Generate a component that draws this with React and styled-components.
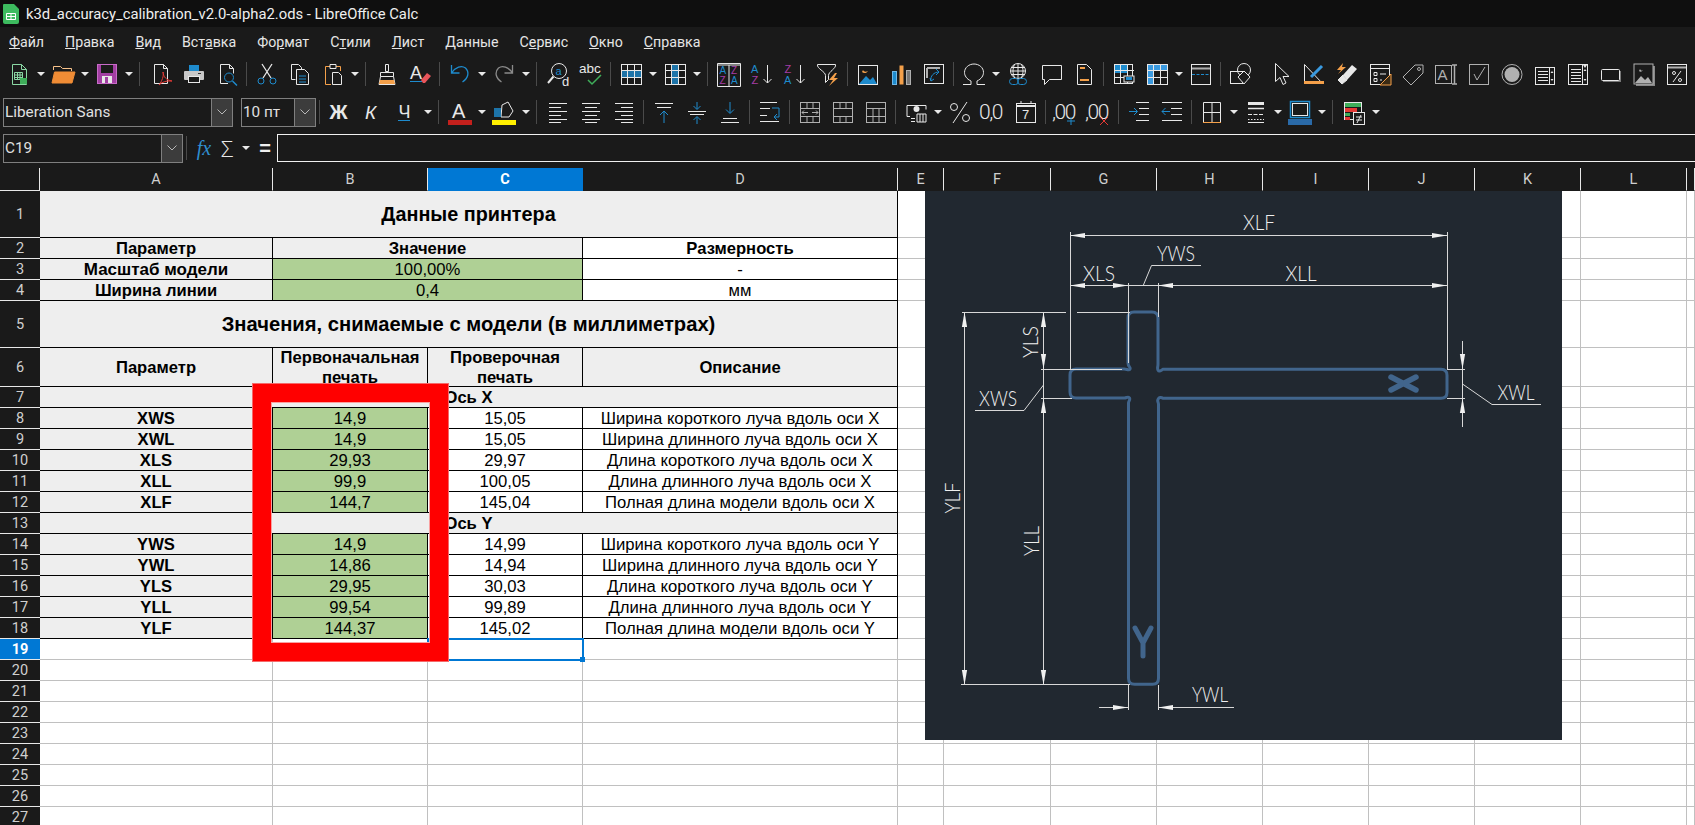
import React from "react";
import styled, { createGlobalStyle } from "styled-components";

const B = "#1e8bcd";
const O = "#f4a04a";
const P = "#a63ca6";
const GR = "#3fae5a";
const R = "#e53935";
const W = "#e8e8e8";
const GY = "#b0b0b0";

const lines = (list, color = W) => (
  <path d={list.map(([x1, x2, y]) => `M${x1} ${y + 0.5}H${x2}`).join("")} stroke={color} />
);
const gridLines = "M8.5 3v19M15.5 3v19M3 8.5h19M3 15.5h19";

const icons = {
  newdoc: (<><path d="M5.5 2.5h9l5 5v15h-14zM14.5 2.5v5h5" stroke="#8ad8a4" /><path d="M7.5 10.5h8v7h-8zM7.5 13h8M7.5 15.5h8M10.5 10.5v7M13 10.5v7" stroke="#8ad8a4" /><rect x="13" y="16" width="7" height="6" fill={GR} /></>),
  open: (<><path d="M2.5 8V4.5h7l2 2h9V9" stroke="#f8c28a" /><path d="M1 21l2.5-11H24l-3 11z" fill="#f08c35" stroke="#f08c35" /></>),
  save: (<><rect x="2.5" y="2.5" width="19" height="19" fill="#a33ea3" stroke="#c76bc7" /><rect x="6" y="3" width="12" height="8" fill="#1a1a1a" /><rect x="7" y="14" width="10" height="7" fill={W} /><rect x="10" y="15" width="3" height="6" fill="#a33ea3" /></>),
  pdf: (<><path d="M5.5 2.5h9l4 4v15h-13zM14.5 2.5v4h4" stroke={W} /><path d="M10 23c3-4 5-9 4-13 .5 5 3 8 9 9-6-.5-10 1-13 4z" stroke={R} /></>),
  print: (<><rect x="7" y="3" width="10" height="6" fill={B} /><rect x="2" y="9" width="20" height="9" rx="1" fill="#c8c8c8" /><rect x="6.5" y="14.5" width="11" height="6" fill="#1a1a1a" stroke={W} /><rect x="16" y="11" width="3" height="1" fill="#333" /></>),
  preview: (<><path d="M13 21.5H5.500v-19h9l4 4v5M14.500 2.500v4h4" stroke={W} /><circle cx="14" cy="15.500" r="4.500" stroke={B} /><path d="M17.500 19l4.500 4.500" stroke={B} strokeWidth="1.500" /></>),
  cut: (<><path d="M7 2l9 14M17 2L8 16" stroke={W} strokeWidth="1.300" /><circle cx="6" cy="19" r="3" stroke={B} /><circle cx="18" cy="19" r="3" stroke={B} /></>),
  copy: (<><path d="M7.500 17.500h-4v-15h7l3 3v2M8.500 7.500h8l4 4v11h-12z" stroke={W} /><path d="M11 14h7M11 17h7M11 20h7" stroke={B} /></>),
  paste: (<><path d="M9 4.500H4.500v18H10M15 4.500h4.500V9" stroke={O} /><path d="M9 2.500h6v4H9zM11.500 10.500h6l3 3v9h-9z" stroke={W} /></>),
  brush: (<><path d="M10.500 2.500h3v7h-3zM5.500 10.500h13v4h-13zM5.500 14.500L4 22.500h16l-1.500-8" stroke={W} /><path d="M5 18h14l1 4H4z" fill={O} /></>),
  clear: (<><text x="2" y="17" fontSize="18" fill={W}>A</text><rect x="2" y="19" width="12" height="1" fill={B} /><path d="M13 18l6-7 4 3-6 7h-2z" fill="#e8555a" /></>),
  undo: <path d="M3.500 3v8h8M3.500 11c4-6 10-8 14-5 4 4 3 10-3 14" stroke={B} strokeWidth="1.300" />,
  redo: <path d="M20.500 3v8h-8M20.500 11c-4-6-10-8-14-5-4 4-3 10 3 14" stroke="#8a8a8a" strokeWidth="1.300" />,
  find: (<><circle cx="13" cy="9" r="7.500" stroke={W} /><path d="M7.500 14.500L2 21" stroke={W} strokeWidth="2" /><text x="9.500" y="13" fontSize="11" fill={B}>a</text><text x="16" y="24" fontSize="13" fill={W}>d</text></>),
  abc: (<><text x="0" y="11" fontSize="13.500" fill={W}>abc</text><path d="M9 18l4 4 9-9" stroke={GR} strokeWidth="1.500" /></>),
  rowhl: (<><rect x="3" y="8" width="19" height="7" fill={B} opacity=".8" /><rect x="2.500" y="2.500" width="20" height="20" stroke={W} /><path d={gridLines} stroke={W} /></>),
  colhl: (<><rect x="9" y="3" width="6" height="19" fill={B} opacity=".8" /><rect x="2.500" y="2.500" width="20" height="20" stroke={W} /><path d={gridLines} stroke={W} /></>),
  sortaz: (<><path d="M.5 1.500h23v23H.5zM12 3v21M1 3h22" stroke={W} /><text x="2.500" y="12" fontSize="10" fill={B}>A</text><text x="2.500" y="22" fontSize="10" fill={P}>Z</text><text x="14" y="12" fontSize="10" fill={P}>Z</text><text x="14" y="22" fontSize="10" fill={B}>A</text></>),
  sortup: (<><text x="1" y="11" fontSize="11" fill={B}>A</text><text x="1.500" y="22" fontSize="11" fill={P}>Z</text><path d="M17.500 3v18M13.500 17l4 4 4-4" stroke={W} /></>),
  sortdown: (<><text x="1.500" y="11" fontSize="11" fill={P}>Z</text><text x="1" y="22" fontSize="11" fill={B}>A</text><path d="M17.500 3v18M13.500 17l4 4 4-4" stroke={W} /></>),
  filter: (<><path d="M1.500 2.500h18c1 4-7 7-7 11v4l-3 3v-7c0-4-9-7-8-11z" stroke={W} /><path d="M19 11l-6 7h4l-4 6 9-8h-4l3-5z" fill={O} /></>),
  image: (<><rect x="2.500" y="3.500" width="19" height="19" stroke={W} /><path d="M3 22l7-8 4 4 3-3 4 7z" fill={B} /><path d="M7 8c1 2 3 2 5 1-1 2-4 3-6 1z" fill={O} /></>),
  chart: (<><rect x="3.500" y="9.500" width="4" height="13" fill={B} stroke="#6fb7e6" /><rect x="10.500" y="3.500" width="4" height="19" fill={O} /><rect x="17.500" y="8.500" width="4" height="14" fill="#777" stroke={GY} /></>),
  pivot: (<><rect x="2.500" y="2.500" width="19" height="19" stroke={W} /><path d="M5 6h13M5 6v10" stroke={GY} strokeWidth="2" /><path d="M9 19c-1-5 3-9 8-9M14 7l3 3-3 3M8 16l1 3 3-2" stroke={B} /></>),
  omega: <path d="M1 22.500h8v-3.500C4.500 17 2.500 13.500 2.500 10.500 2.500 5.500 7 2 12 2s9.500 3.500 9.500 8.500c0 3-2 6.500-6.500 8.500v3.500h8" stroke={W} />,
  link: (<><circle cx="12" cy="9" r="7.500" stroke={W} /><path d="M12 1.500v15M4.500 9h15M5 5.500h14M5 12.500h14M8.500 2.500c-2 4-2 9 0 13M15.500 2.500c2 4 2 9 0 13" stroke={W} /><rect x="3.500" y="16.500" width="9" height="6" rx="3" stroke={B} fill="#1a1a1a" /><rect x="11.500" y="16.500" width="9" height="6" rx="3" stroke={B} /></>),
  comment: <path d="M3.500 3.500h19v14h-12l-5 5v-5h-2z" stroke={W} />,
  header: (<><path d="M5.500 2.500h9l5 5v15h-14z" stroke={W} /><path d="M8 6h5M8 18h9" stroke={O} strokeWidth="2" /></>),
  freezeprint: (<><rect x="2.500" y="2.500" width="18" height="19" stroke={W} /><rect x="3" y="3" width="12" height="8" fill={B} /><path d={gridLines} stroke={W} /><rect x="12" y="14" width="10" height="6" fill="#1a1a1a" stroke={W} /><rect x="14" y="15" width="6" height="3" fill={B} /></>),
  freeze: (<><rect x="3" y="3" width="6" height="20" fill="#3a9ae0" /><rect x="3" y="3" width="20" height="6" fill="#3a9ae0" /><rect x="2.500" y="2.500" width="20" height="20" stroke={W} /><path d={gridLines} stroke={W} /></>),
  split: (<><rect x="2.500" y="2.500" width="19" height="20" stroke={W} /><path d="M3 6.500h18" stroke={GY} strokeWidth="2" /><path d="M3 12.500h18" stroke={B} strokeDasharray="3 1.500" /></>),
  shapes: (<><rect x="1.500" y="9.500" width="12" height="12" stroke={W} /><circle cx="15" cy="8" r="6.500" stroke={W} /><path d="M15 9l6 6-6 7-6-7z" stroke={W} fill="#1a1a1a" /></>),
  pointer: <path d="M6.500 1.500v18l4.500-4 3 7 3-1.500-3-6.500h6z" stroke={W} />,
  measure: (<><path d="M2.500 2.500v19h18z" stroke={W} /><rect x="2" y="19" width="20" height="3" fill={O} /><path d="M9 15l11-11" stroke="#3a9ae0" strokeWidth="3" /></>),
  highlight: (<><path d="M8 13l9-10 5 4-10 11z" fill={W} /><path d="M3 18l5-5 4 5-5 4z" stroke={W} fill={W} /><path d="M8 1L2 8h4l-3 4 8-7H7z" fill={O} /></>),
  form: (<><rect x="2.500" y="2.500" width="19" height="20" stroke={W} /><path d="M3 6.500h18M6 10.500h3v3H6zM6 16.500h3v3H6zM12 12h6M12 18h2" stroke={W} /><path d="M23 12v11H12z" stroke={O} fill="#3a2a14" /></>),
  tag: (<><path d="M14 3h8v8L10 23 2 15z" stroke={GY} /><circle cx="18" cy="7" r="1.500" stroke={GY} /></>),
  ai: (<><rect x="1.500" y="3.500" width="16" height="18" stroke={GY} /><text x="3.500" y="18" fontSize="15" fill={GY}>A</text><path d="M18 3h5M20.500 3v19M18 22h5" stroke={GY} strokeWidth="1.500" /></>),
  checkb: (<><rect x="2.500" y="2.500" width="19" height="20" stroke={GY} /><path d="M7 12l3 6 8-13" stroke={GY} /></>),
  radio: (<><circle cx="12" cy="12.500" r="10" stroke={GY} /><circle cx="12" cy="12.500" r="7.500" fill={GY} /></>),
  listb: (<><rect x="2.500" y="5.500" width="19" height="17" stroke={W} /><path d="M5 9.500h10M5 12.500h10M5 15.500h10M5 18.500h10M16.500 6v16" stroke={W} /><path d="M19 9l1.500 2h-3zM19 19l1.500-2h-3z" fill={W} /></>),
  listb2: (<><rect x="2.500" y="2.500" width="19" height="20" stroke={W} /><path d="M5 7.500h10M5 10.500h10M5 13.500h10M5 16.500h10M5 19.500h10M16.500 3v19" stroke={W} /><path d="M19 7l1.500 2h-3zM19 19l1.500-2h-3zM17 3h4l-2 3z" fill={W} /></>),
  rectb: (<><rect x="4" y="9" width="18" height="11" fill="#777" /><rect x="2.500" y="7.500" width="18" height="11" rx="1" fill="#1a1a1a" stroke={W} /></>),
  imgb: (<><rect x="4" y="4" width="19" height="20" fill="#888" /><rect x="2" y="2" width="19" height="20" fill="#1a1a1a" stroke={GY} /><path d="M3 21l6-7 4 4 3-3 4 6z" fill={GY} /><path d="M8 7c1 2 2 2 3 1-1 2-3 2-4 1z" fill={GY} /></>),
  pct: (<><rect x="2.500" y="2.500" width="19" height="20" stroke={W} /><path d="M3 5.500h18" stroke={GY} strokeWidth="2" /><path d="M16 9L8 20" stroke={W} /><circle cx="9" cy="11" r="1.500" stroke={W} /><circle cx="15" cy="18" r="1.500" stroke={W} /></>),
  bold: <text x="1.500" y="19" fontSize="20" fontWeight="700" fill={W} fontFamily="Liberation Sans">Ж</text>,
  italic: <text x="4" y="19" fontSize="19" fontStyle="italic" fill={W} fontFamily="Liberation Sans">К</text>,
  under: (<><text x="4.500" y="18" fontSize="18" fill={W} fontFamily="Liberation Sans">Ч</text><rect x="4" y="20" width="12" height="1" fill={B} /></>),
  fontcolor: (<><text x="4" y="18" fontSize="20" fill={W}>A</text><rect x="0" y="20" width="24" height="5" fill="#c4201c" /></>),
  hilite: (<><path d="M10 5l6-3 5 9-4 6H9z" stroke={W} fill="#1a1a1a" /><rect x="2" y="8" width="7" height="9" fill={B} opacity=".8" /><rect x="0" y="20" width="24" height="5" fill="#ffef00" /></>),
  alignl: lines([[3, 21, 3], [3, 15, 7], [3, 21, 11], [3, 15, 15], [3, 21, 19], [3, 15, 22]]),
  alignc: lines([[3, 21, 3], [6, 18, 7], [3, 21, 11], [6, 18, 15], [3, 21, 19], [6, 18, 22]]),
  alignr: lines([[3, 21, 3], [9, 21, 7], [3, 21, 11], [9, 21, 15], [3, 21, 19], [9, 21, 22]]),
  vtop: (<>{lines([[3, 21, 3], [5, 19, 7]])}<path d="M12 23V11M8 15l4-4 4 4" stroke={B} /></>),
  vmid: (<>{lines([[3, 21, 11], [5, 19, 14]])}<path d="M12 2v7M8.500 6l3.500 3.500L15.500 6M12 24v-7M8.500 20l3.500-3.500 3.500 3.500" stroke={B} /></>),
  vbot: (<>{lines([[5, 19, 18], [3, 21, 22]])}<path d="M12 2v11M8 9.500l4 4 4-4" stroke={B} /></>),
  wrap: (<>{lines([[2, 19, 2], [2, 12, 8], [2, 9, 15], [2, 21, 21]])}<path d="M14 8h7v9h-5M19 14l-3 3 3 3" stroke={B} /></>),
  merge: (<><rect x="2.500" y="2.500" width="19" height="20" stroke={GY} /><path d="M3 8.500h18M3 16.500h18M9 3v5M15 3v5M9 17v5M15 17v5" stroke={GY} /><path d="M4 12.500h6M4 12.500l2-2M4 12.500l2 2M20 12.500h-6M20 12.500l-2-2M20 12.500l-2 2" stroke={GY} /></>),
  cell: (<><rect x="2.500" y="2.500" width="19" height="20" stroke={GY} /><path d="M3 8.500h18M3 16.500h18M9 3v5M15 3v5M9 17v5M15 17v5" stroke={GY} /></>),
  cell2: (<><rect x="2.500" y="2.500" width="19" height="20" stroke={GY} /><path d="M3 8.500h18M3 16.500h18M9 9v7M15 9v7M9 17v5M15 17v5" stroke={GY} /></>),
  currency: (<><path d="M3 16.500V5.500h19v4M3 16.500h3" stroke={W} /><circle cx="12.500" cy="9" r="3" fill={W} /><path d="M7 18.500h4M7 21.500h4M13 14h9v8h-9zM16 14v8M19 14v8" stroke={W} /></>),
  percent: (<><circle cx="6" cy="7" r="3.500" stroke={W} /><circle cx="18" cy="18" r="3.500" stroke={W} /><path d="M19 2L5 23" stroke={W} /></>),
  number: <text x="-2" y="19" fontSize="21" fontWeight="300" fill={W} fontFamily="Roboto" letterSpacing="-1.5">0,0</text>,
  date: (<><rect x="2.500" y="3.500" width="19" height="19" stroke={W} /><path d="M2.500 6h19" stroke={W} strokeWidth="2" /><path d="M7 1v3M17 1v3" stroke={W} /><text x="8" y="19" fontSize="13" fill={W}>7</text></>),
  adddec: (<><text x="-2" y="19" fontSize="21" fontWeight="300" fill={W} fontFamily="Roboto" letterSpacing="-1.5">,00</text><path d="M17 17v8M13 21h8" stroke={B} /></>),
  deldec: (<><text x="-2" y="19" fontSize="21" fontWeight="300" fill={W} fontFamily="Roboto" letterSpacing="-1.5">,00</text><path d="M13 17l8 8M21 17l-8 8" stroke={R} /></>),
  indent: (<>{lines([[9, 22, 2], [12, 22, 8], [12, 22, 14], [9, 22, 20]])}<path d="M2 11.500h8M7 8l3.500 3.500L7 15" stroke={B} /></>),
  outdent: (<>{lines([[2, 22, 2], [11, 22, 8], [11, 22, 14], [2, 22, 20]])}<path d="M2 11.500h8M5.500 8L2 11.500 5.500 15" stroke={B} /></>),
  borders: (<><path d="M3.500 2.500h17v20M3.500 2.500v20M12 3v19M3 12.500h18" stroke={W} /><path d="M3 22.500h18" stroke={O} /></>),
  borderstyle: (<><path d="M4 3.500h16" stroke={W} strokeWidth="3" /><path d="M4 8.500h16" stroke={W} strokeWidth="1.500" /><path d="M4 14.500h16" stroke={W} strokeDasharray="4 1.500" /><path d="M4 19.500h16" stroke={W} strokeDasharray="1.500 1.500" /><path d="M4 22.500h16" stroke={W} /></>),
  bordercolor: (<><rect x="2.500" y="1.500" width="19" height="16" stroke={B} strokeWidth="1.500" /><rect x="4.500" y="3.500" width="15" height="12" stroke={W} /><rect x="0" y="19" width="24" height="6" fill="#2a6aa8" /></>),
  cond: (<><rect x="2.500" y="2.500" width="17" height="17" stroke={W} /><rect x="3" y="3" width="16" height="4" fill={GR} /><rect x="3" y="8" width="12" height="4" fill={R} /><rect x="3" y="13" width="5" height="3" fill={GR} /><rect x="3" y="17" width="5" height="3" fill={R} /><rect x="11.500" y="12.500" width="11" height="12" fill="#1a1a1a" stroke={W} /><path d="M14 17h6M14 20h6M19 15l-4 8" stroke={W} /></>),
};

const topTools = ["newdoc", "d", "open", "d", "save", "d", "s", "pdf", "print", "preview", "s", "cut", "copy", "paste", "d", "s", "brush", "clear", "s", "undo", "d", "redo", "d", "s", "find", "abc", "s", "rowhl", "d", "colhl", "d", "s", "sortaz", "sortup", "sortdown", "filter", "s", "image", "chart", "pivot", "s", "omega", "d", "link", "comment", "header", "s", "freezeprint", "freeze", "d", "split", "s", "shapes", "g", "pointer", "measure", "highlight", "form", "tag", "ai", "checkb", "radio", "listb", "listb2", "rectb", "imgb", "pct"];
const fmtTools = ["s", "bold", "italic", "under", "d", "s", "fontcolor", "d", "hilite", "d", "s", "alignl", "alignc", "alignr", "s", "vtop", "vmid", "vbot", "s", "wrap", "s", "merge", "cell", "cell2", "s", "currency", "d", "percent", "number", "date", "s", "adddec", "deldec", "s", "indent", "outdent", "s", "borders", "d", "borderstyle", "d", "bordercolor", "d", "s", "cond", "d"];

const menus = [
  ["", "Ф", "айл"], ["", "П", "равка"], ["", "В", "ид"], ["Вст", "а", "вка"], ["Фо", "р", "мат"], ["С", "т", "или"],
  ["", "Л", "ист"], ["", "Д", "анные"], ["С", "е", "рвис"], ["", "О", "кно"], ["", "С", "правка"],
];

const colNames = ["A", "B", "C", "D", "E", "F", "G", "H", "I", "J", "K", "L", ""];
const rowSizes = [47, 21, 21, 21, 47, 39, ...Array(23).fill(21)];

const tableRows = [
  [{ t: "Данные принтера", span: 4, kind: "title", size: 19.8 }],
  [{ t: "Параметр", kind: "head" }, { t: "Значение", span: 2, kind: "head", plain: true }, { t: "Размерность", kind: "head", plain: true }],
  [{ t: "Масштаб модели", kind: "head", size: 17 }, { t: "100,00%", span: 2, kind: "green" }, { t: "-", kind: "white" }],
  [{ t: "Ширина линии", kind: "head" }, { t: "0,4", span: 2, kind: "green" }, { t: "мм", kind: "white" }],
  [{ t: "Значения, снимаемые с модели (в миллиметрах)", span: 4, kind: "title", size: 20.2 }],
  [{ t: "Параметр", kind: "head" }, { t: "Первоначальная печать", kind: "head" }, { t: "Проверочная печать", kind: "head" }, { t: "Описание", kind: "head" }],
  [{ t: "Ось X", span: 4, kind: "head" }],
];
const dataRow = (name, first, second, desc) => [
  { t: name, kind: "head" }, { t: first, kind: "green" }, { t: second, kind: "white" }, { t: desc, kind: "white" },
];
const tableData = [
  ...tableRows,
  dataRow("XWS", "14,9", "15,05", "Ширина короткого луча вдоль оси X"),
  dataRow("XWL", "14,9", "15,05", "Ширина длинного луча вдоль оси X"),
  dataRow("XLS", "29,93", "29,97", "Длина короткого луча вдоль оси X"),
  dataRow("XLL", "99,9", "100,05", "Длина длинного луча вдоль оси X"),
  dataRow("XLF", "144,7", "145,04", "Полная длина модели вдоль оси X"),
  [{ t: "Ось Y", span: 4, kind: "head" }],
  dataRow("YWS", "14,9", "14,99", "Ширина короткого луча вдоль оси Y"),
  dataRow("YWL", "14,86", "14,94", "Ширина длинного луча вдоль оси Y"),
  dataRow("YLS", "29,95", "30,03", "Длина короткого луча вдоль оси Y"),
  dataRow("YLL", "99,54", "99,89", "Длина длинного луча вдоль оси Y"),
  dataRow("YLF", "144,37", "145,02", "Полная длина модели вдоль оси Y"),
];

const Tool = ({ name }) => {
  if (name === "d") return <Drop />;
  if (name === "s") return <Sep />;
  if (name === "g") return <Sep $hidden />;
  return (
    <ToolIcon>
      <svg width="24" height="24" viewBox="0 0 24 24" fill="none" fontFamily="Liberation Sans" overflow="visible">
        {icons[name]}
      </svg>
    </ToolIcon>
  );
};

const Chevron = () => (
  <svg width="10" height="6" viewBox="0 0 10 6" fill="none">
    <path d="M.5.5L5 5 9.500.5" stroke="#b8b8b8" />
  </svg>
);

const Tip = ({ x, y, dir }) => {
  const len = 15;
  const half = 2.6;
  const pts = {
    l: [[x, y], [x + len, y - half], [x + len, y + half]],
    r: [[x, y], [x - len, y - half], [x - len, y + half]],
    u: [[x, y], [x - half, y + len], [x + half, y + len]],
    d: [[x, y], [x - half, y - len], [x + half, y - len]],
  }[dir];
  return <polygon points={pts.map((p) => p.join(",")).join(" ")} fill="#f0f0f0" stroke="none" />;
};

const DimText = ({ x, y, w, rot, children }) => (
  <text
    x={x}
    y={y + 7.5}
    textAnchor="middle"
    textLength={w}
    lengthAdjust="spacingAndGlyphs"
    fontFamily="Lato, 'Open Sans', sans-serif"
    fontWeight="300"
    fontSize="21"
    fill="#eeeeee"
    stroke="none"
    transform={rot ? `rotate(-90 ${x} ${y})` : undefined}
  >
    {children}
  </text>
);

const outline =
  "M1128 318q0-6 6-6h18q6 0 6 6v46c0 3-1 4 0 6s2 1 5-.7h278q6 0 6 6v17q0 6-6 6H1163c-2-1.500-4-1-5 1s.5 3 .5 5v274q0 6-6 6h-18q-6 0-6-6V403c0-2 2-3 1-5s-3 0-5 0H1076q-6 0-6-6v-17q0-6 6-6h48c3 0 5 2 6 0s-2-2-2-6z";

const Drawing = () => (
  <svg width="637" height="549" viewBox="925 191 637 549" fill="none">
    <path d={outline} stroke="#41658c" strokeWidth="3" />
    <path d="M1391 377l25 13M1416 377l-25 13" stroke="#41658c" strokeWidth="5.500" strokeLinecap="round" />
    <path d="M1135 628l8 15 8-15M1143 643v13" stroke="#41658c" strokeWidth="5" strokeLinecap="round" />
    <g stroke="#d8d8d8" strokeWidth="1">
      <path d="M1070.500 232v138M1447.500 232v138M1128.500 283v80M1158.500 283v34M1070 235.500h377M1070 285.500h377" />
      <path d="M1143 286l8.500-20.500H1201" />
      <path d="M962 312.500h104M1077 312.500h53M964.500 312v373M1043.500 312v373M1041 369.500h81M1041 398.500h31M1447 369.500h18M1447 398.500h18" />
      <path d="M1043.500 385L1024 410.500H975M1462.500 341v86M1462.500 384L1492 404.500h49" />
      <path d="M961 684.500h169M1128.500 685v25M1158.500 685v25M1099 707.500h29M1158 707.500h76" />
    </g>
    <Tip x={1070} y={235.5} dir="l" />
    <Tip x={1447} y={235.5} dir="r" />
    <Tip x={1070} y={285.5} dir="l" />
    <Tip x={1128} y={285.5} dir="r" />
    <Tip x={1158} y={285.5} dir="l" />
    <Tip x={1447} y={285.5} dir="r" />
    <Tip x={964.5} y={312} dir="u" />
    <Tip x={1043.5} y={312} dir="u" />
    <Tip x={1043.5} y={369} dir="d" />
    <Tip x={1043.5} y={398} dir="u" />
    <Tip x={964.5} y={685} dir="d" />
    <Tip x={1043.5} y={685} dir="d" />
    <Tip x={1462.5} y={369} dir="d" />
    <Tip x={1462.5} y={398} dir="u" />
    <Tip x={1128} y={707.5} dir="r" />
    <Tip x={1158} y={707.5} dir="l" />
    <DimText x={1259} y={222} w={32}>XLF</DimText>
    <DimText x={1176} y={253} w={38}>YWS</DimText>
    <DimText x={1099} y={273} w={32}>XLS</DimText>
    <DimText x={1301} y={273} w={31}>XLL</DimText>
    <DimText x={998} y={398} w={38}>XWS</DimText>
    <DimText x={1516} y={392} w={37}>XWL</DimText>
    <DimText x={1210} y={694} w={36}>YWL</DimText>
    <DimText x={1030} y={342} w={32} rot>YLS</DimText>
    <DimText x={952} y={498} w={31} rot>YLF</DimText>
    <DimText x={1031} y={541} w={30} rot>YLL</DimText>
  </svg>
);

export default function App() {
  return (
    <Page>
      <GlobalStyle />
      <TitleBar>
        <AppIcon width="16" height="20" viewBox="0 0 16 20">
          <path d="M1 0h10l5 5v13a2 2 0 0 1-2 2H2a2 2 0 0 1-2-2V1a1 1 0 0 1 1-1z" fill="#3dbb5f" />
          <path d="M3.500 9.500h9v6h-9zM3.500 12.500h9M8 9.500v6" stroke="#fff" fill="none" />
        </AppIcon>
        k3d_accuracy_calibration_v2.0-alpha2.ods - LibreOffice Calc
      </TitleBar>
      <MenuBar>
        {menus.map(([a, u, b]) => (
          <MenuItem key={a + u + b}>
            {a}
            <u>{u}</u>
            {b}
          </MenuItem>
        ))}
      </MenuBar>
      <Toolbar $h={36}>
        {topTools.map((name, i) => (
          <Tool key={i} name={name} />
        ))}
      </Toolbar>
      <Toolbar $h={40}>
        <Combo $w={230}>
          <ComboText>Liberation Sans</ComboText>
          <ComboArrow><Chevron /></ComboArrow>
        </Combo>
        <Combo $w={75} $gap={8}>
          <ComboText>10 пт</ComboText>
          <ComboArrow><Chevron /></ComboArrow>
        </Combo>
        {fmtTools.map((name, i) => (
          <Tool key={i} name={name} />
        ))}
      </Toolbar>
      <FormulaBar>
        <Combo $w={180}>
          <ComboText>C19</ComboText>
          <ComboArrow><Chevron /></ComboArrow>
        </Combo>
        <Sep />
        <FxMark>fx</FxMark>
        <SigmaMark>Σ</SigmaMark>
        <Drop />
        <EqualsMark>=</EqualsMark>
        <FormulaInput />
      </FormulaBar>
      <Sheet>
        <ColHead $corner />
        {colNames.map((c, i) => (
          <ColHead key={i} $active={c === "C"}>{c}</ColHead>
        ))}
        {rowSizes.map((_, r) => (
          <React.Fragment key={r}>
            <RowHead $active={r === 18}>{r + 1}</RowHead>
            {r < tableData.length
              ? tableData[r].map((cell, i) => (
                  <Cell key={i} $span={cell.span} $kind={cell.kind} $size={cell.size} $white={cell.plain && i === 2}>
                    {cell.t}
                  </Cell>
                ))
              : [0, 1, 2, 3].map((c) => <Blank key={c} $selected={r === 18 && c === 2} />)}
            {Array.from({ length: 9 }, (_, c) => (
              <Blank key={`x${c}`} />
            ))}
          </React.Fragment>
        ))}
        <Picture>
          <Drawing />
        </Picture>
        <RedFrame />
      </Sheet>
    </Page>
  );
}

const GlobalStyle = createGlobalStyle`
  html, body {
    margin: 0;
    height: 100%;
    overflow: hidden;
    background: #1a1a1a;
  }
`;

const Page = styled.div`
  width: 1695px;
  height: 825px;
  overflow: hidden;
  background: #1a1a1a;
  color: #e8e8e8;
  font-family: "Roboto", "Noto Sans", sans-serif;
`;

const TitleBar = styled.div`
  height: 27px;
  display: flex;
  align-items: center;
  gap: 7px;
  padding-left: 3px;
  background: #0f0f0f;
  font-size: 14.8px;
  color: #eeeeee;
`;

const AppIcon = styled.svg`
  flex: none;
`;

const MenuBar = styled.div`
  height: 29px;
  display: flex;
  align-items: center;
  gap: 21px;
  padding-left: 9px;
  font-size: 14.2px;
  color: #e6e6e6;
`;

const MenuItem = styled.span`
  white-space: nowrap;
`;

const Toolbar = styled.div`
  height: ${(p) => p.$h}px;
  display: flex;
  align-items: center;
  padding-left: 2px;
  white-space: nowrap;
`;

const ToolIcon = styled.span`
  flex: none;
  width: 33px;
  height: 26px;
  display: flex;
  align-items: center;
  justify-content: center;
`;

const Drop = styled.span`
  flex: none;
  width: 11px;
  height: 10px;
  display: flex;
  align-items: center;
  justify-content: center;
  &::before {
    content: "";
    border-left: 4px solid transparent;
    border-right: 4px solid transparent;
    border-top: 4px solid #e8e8e8;
  }
`;

const Sep = styled.span`
  flex: none;
  width: 7px;
  height: 24px;
  display: flex;
  justify-content: center;
  ${Drop} + & {
    width: 10px;
  }
  &::before {
    content: "";
    width: 1px;
    background: ${(p) => (p.$hidden ? "transparent" : "#4a4a4a")};
  }
`;

const Combo = styled.div`
  flex: none;
  box-sizing: border-box;
  width: ${(p) => p.$w}px;
  height: 29px;
  margin-left: ${(p) => p.$gap || 1}px;
  display: flex;
  border: 1.5px solid #7f7f7f;
  font-size: 15.3px;
`;

const ComboText = styled.span`
  flex: 1;
  padding-left: 1px;
  line-height: 26px;
  color: #e0e0e0;
  white-space: nowrap;
  overflow: hidden;
`;

const ComboArrow = styled.span`
  flex: none;
  width: 20px;
  display: flex;
  align-items: center;
  justify-content: center;
  background: #3c3c3c;
  border-left: 1px solid #7f7f7f;
`;

const FormulaBar = styled.div`
  height: 32px;
  margin-bottom: 4px;
  display: flex;
  align-items: center;
  padding-left: 2px;
`;

const FxMark = styled.span`
  flex: none;
  width: 26px;
  margin-left: 1px;
  text-align: center;
  color: #2f8fd0;
  font-family: "Liberation Serif", serif;
  font-style: italic;
  font-size: 20px;
`;

const SigmaMark = styled.span`
  flex: none;
  width: 20px;
  margin-right: 3px;
  text-align: center;
  color: #e8e8e8;
  font-family: "Open Sans", sans-serif;
  font-weight: 300;
  font-size: 22px;
`;

const EqualsMark = styled.span`
  flex: none;
  width: 18px;
  margin: 0 3px 0 5px;
  text-align: center;
  font-family: "Liberation Sans", sans-serif;
  font-weight: 700;
  font-size: 20px;
  color: #f0f0f0;
`;

const FormulaInput = styled.div`
  flex: 1;
  height: 26px;
  margin-right: -3px;
  border: 1px solid #f0f0f0;
`;

const Sheet = styled.div`
  position: relative;
  display: grid;
  grid-template-columns: 40px 233px 155px 155px 315px 46px 107px 106px 106px 106px 106px 106px 106px 8px;
  grid-template-rows: 23px ${rowSizes.map((h) => `${h}px`).join(" ")};
  background: #fff;
`;

const ColHead = styled.div`
  display: flex;
  align-items: center;
  justify-content: center;
  box-sizing: border-box;
  padding-top: 1px;
  background: ${(p) => (p.$active ? "#0078d4" : "#1a1a1a")};
  border-right: 1px solid ${(p) => (p.$active ? "#0078d4" : "#e8e8e8")};
  border-bottom: 1px solid ${(p) => (p.$corner ? "#e8e8e8" : p.$active ? "#0078d4" : "#1a1a1a")};
  color: ${(p) => (p.$active ? "#fff" : "#cfcfcf")};
  font-weight: ${(p) => (p.$active ? 700 : 400)};
  font-size: 14.5px;
`;

const RowHead = styled.div`
  display: flex;
  align-items: center;
  justify-content: center;
  box-sizing: border-box;
  padding-top: 1px;
  background: ${(p) => (p.$active ? "#0078d4" : "#1a1a1a")};
  border-bottom: 1px solid #e8e8e8;
  color: ${(p) => (p.$active ? "#fff" : "#cfcfcf")};
  font-weight: ${(p) => (p.$active ? 700 : 400)};
  font-size: 14.5px;
`;

const cellBackground = { title: "#eeeeee", head: "#eeeeee", green: "#afd095", white: "#ffffff" };

const Cell = styled.div`
  grid-column: span ${(p) => p.$span || 1};
  display: flex;
  align-items: center;
  justify-content: center;
  box-sizing: border-box;
  padding-top: 1px;
  overflow: hidden;
  text-align: center;
  border-right: 1px solid #000;
  border-bottom: 1px solid #000;
  background: ${(p) => (p.$white ? "#fff" : cellBackground[p.$kind])};
  color: #000;
  font-family: "Liberation Sans", sans-serif;
  font-size: ${(p) => (p.$size ? p.$size : p.$kind === "head" ? 16.6 : 16.67)}px;
  font-weight: ${(p) => (p.$kind === "title" || p.$kind === "head" ? 700 : 400)};
  line-height: 19.5px;
`;

const Blank = styled.div`
  box-sizing: border-box;
  position: relative;
  border-right: 1px solid #c0c0c0;
  border-bottom: 1px solid #c0c0c0;
  ${(p) =>
    p.$selected &&
    `
    z-index: 1;
    outline: 2px solid #0078d4;
    outline-offset: -1px;
    &::after {
      content: "";
      position: absolute;
      right: -3px;
      bottom: -3px;
      width: 5px;
      height: 5px;
      background: #0078d4;
    }
  `}
`;

const Picture = styled.div`
  position: absolute;
  z-index: 2;
  left: 925px;
  top: 23px;
  width: 637px;
  height: 549px;
  background: #212830;
`;

const RedFrame = styled.div`
  position: absolute;
  z-index: 3;
  left: 253px;
  top: 216px;
  box-sizing: border-box;
  width: 195px;
  height: 277px;
  border: 18px solid #ff0000;
  box-shadow: 0 0 0 1px #f56a6a, inset 0 0 0 1px #f9a0a0;
`;
